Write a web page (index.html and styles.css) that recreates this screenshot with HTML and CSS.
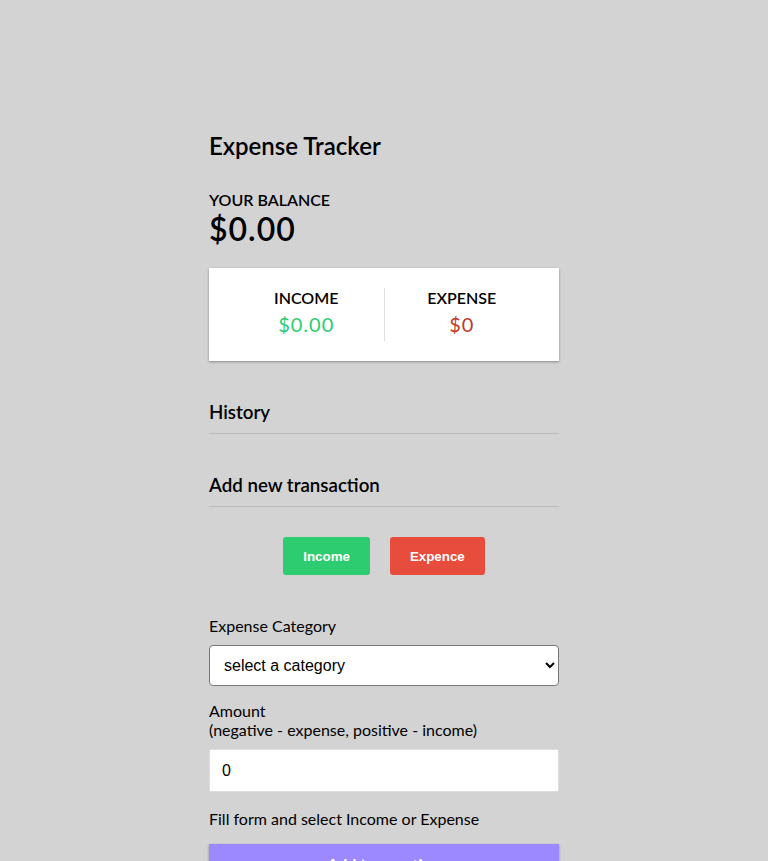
FILE: index.html
```html
<!DOCTYPE html>
<html lang="en">
<head>
<meta charset="utf-8">
<title>Expense Tracker</title>
<link rel="stylesheet" href="styles.css">
</head>
<body>
<div class="container">
  <h1 class="title">Expense Tracker</h1>
  <h4 class="balance-label">Your Balance</h4>
  <h2 class="balance">$0.00</h2>

  <div class="inc-exp">
    <div class="col">
      <h4 class="col-label">Income</h4>
      <p class="money plus">$0.00</p>
    </div>
    <div class="col">
      <h4 class="col-label">Expense</h4>
      <p class="money minus">$0</p>
    </div>
  </div>

  <h3 class="section">History</h3>
  <ul class="list"></ul>

  <h3 class="section">Add new transaction</h3>
  <div class="type-buttons">
    <button class="type inc" type="button">Income</button>
    <button class="type exp" type="button">Expence</button>
  </div>

  <form class="form">
    <div class="form-control">
      <label class="label" for="category">Expense Category</label>
      <select id="category" class="select">
        <option>select a category</option>
      </select>
    </div>
    <div class="form-control">
      <label class="label" for="amount">Amount <br>(negative - expense, positive - income)</label>
      <input id="amount" class="input" type="number" value="0">
    </div>
    <p class="hint">Fill form and select Income or Expense</p>
    <button class="btn" type="button">Add transaction</button>
  </form>
</div>
</body>
</html>
```
FILE: styles.css
```css
* { box-sizing: border-box; }

body {
  margin: 0;
  background-color: #d3d3d3;
  font-family: Lato, "Open Sans", sans-serif;
  color: #000;
  display: flex;
  justify-content: center;
}

.container {
  width: 350px;
  margin: 131px 0 30px;
}

.title {
  font-size: 24px;
  font-weight: 600;
  line-height: normal;
  margin: 0 0 30px;
}

.balance-label {
  font-size: 16px;
  font-weight: 600;
  text-transform: uppercase;
  line-height: normal;
  margin: 0;
}

.balance {
  font-size: 32px;
  font-weight: 600;
  letter-spacing: 1px;
  line-height: normal;
  margin: 0;
}

.inc-exp {
  background-color: #fff;
  box-shadow: 0 1px 3px rgba(0, 0, 0, 0.12), 0 1px 2px rgba(0, 0, 0, 0.24);
  padding: 20px;
  display: flex;
  margin: 20px 0 0;
}

.col {
  flex: 1;
  text-align: center;
}

.col:first-child {
  border-right: 1px solid #dedede;
}

.col-label {
  font-size: 16px;
  font-weight: 600;
  text-transform: uppercase;
  line-height: normal;
  margin: 0;
}

.money {
  font-size: 20px;
  letter-spacing: 1px;
  line-height: normal;
  margin: 5px 0;
}

.money.plus { color: #2ecc71; }
.money.minus { color: #c0392b; }

.section {
  font-size: 18.72px;
  font-weight: 600;
  line-height: normal;
  margin: 40px 0 0;
  padding-bottom: 10px;
  border-bottom: 1px solid #bbb;
}

.list {
  list-style: none;
  margin: 0;
  padding: 0;
}

.type-buttons {
  display: flex;
  justify-content: center;
  gap: 20px;
  margin-top: 30px;
}

.type {
  font-family: "Liberation Sans", Arial, sans-serif;
  font-weight: bold;
  font-size: 13.33px;
  color: #fff;
  border: 0;
  border-radius: 3px;
  height: 38px;
  padding: 0 20px;
}

.type.inc { background-color: #2ecc71; }
.type.exp { background-color: #e74c3c; }

.form {
  margin-top: 31px;
}

.label {
  display: inline-block;
  font-size: 16px;
  line-height: 19px;
  margin: 10px 0;
}

.select {
  display: block;
  width: 100%;
  height: 41px;
  font-family: "Liberation Sans", Arial, sans-serif;
  font-size: 16px;
  padding: 0 10px;
  background-color: #fff;
  border: 1px solid #767676;
  border-radius: 4px;
  color: #000;
  margin-bottom: 5px;
}

.input {
  display: block;
  width: 100%;
  height: 43px;
  font-family: "Liberation Sans", Arial, sans-serif;
  font-size: 16px;
  padding: 10px 12px;
  border: 1px solid #dedede;
  border-radius: 2px;
  background-color: #fff;
}

.hint {
  font-size: 16px;
  line-height: 19px;
  margin: 17px 0 16px;
}

.btn {
  display: block;
  width: 100%;
  background-color: #9c88ff;
  box-shadow: 0 1px 3px rgba(0, 0, 0, 0.12), 0 1px 2px rgba(0, 0, 0, 0.24);
  color: #fff;
  border: 0;
  font-family: Lato, sans-serif;
  font-weight: bold;
  font-size: 16px;
  padding: 10px;
  margin: 0 0 30px;
}
```
